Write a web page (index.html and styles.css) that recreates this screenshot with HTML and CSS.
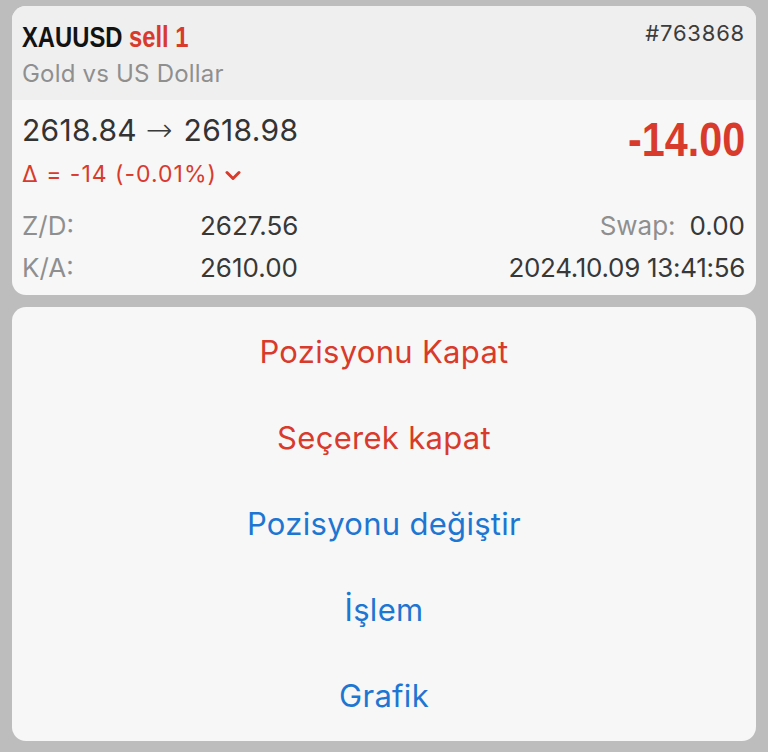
FILE: index.html
```html
<!DOCTYPE html>
<html lang="tr">
<head>
<meta charset="utf-8">
<title>XAUUSD sell 1</title>
<link rel="stylesheet" href="styles.css">
</head>
<body>
<div class="screen">
  <section class="card position">
    <header class="pos-head">
      <div class="head-row">
        <div class="title"><span class="sym">XAUUSD</span> <span class="side">sell 1</span></div>
        <div class="ticket">#763868</div>
      </div>
      <div class="desc">Gold vs US Dollar</div>
    </header>
    <div class="pos-body">
      <div class="price-row">
        <div class="price-col">
          <div class="prices">2618.84 <span class="arrow">→</span> 2618.98</div>
          <div class="delta">Δ = -14 (-0.01%)<svg class="chev" width="16" height="11" viewBox="0 0 16 11"><path d="M2 2.5 L8 8.5 L14 2.5" fill="none" stroke="#d83b2c" stroke-width="3" stroke-linecap="round" stroke-linejoin="round"/></svg></div>
        </div>
        <div class="profit">-14.00</div>
      </div>
      <div class="details">
        <span class="lbl">Z/D:</span><span class="val">2627.56</span><span class="right"><span class="lbl">Swap:</span><span class="val swap">0.00</span></span>
        <span class="lbl">K/A:</span><span class="val">2610.00</span><span class="right"><span class="val date">2024.10.09 13:41:56</span></span>
      </div>
    </div>
  </section>
  <nav class="card actions">
    <div class="action red">Pozisyonu Kapat</div>
    <div class="action red">Seçerek kapat</div>
    <div class="action blue">Pozisyonu değiştir</div>
    <div class="action blue">İşlem</div>
    <div class="action blue">Grafik</div>
  </nav>
</div>
</body>
</html>
```

FILE: styles.css
```css
html, body {
  margin: 0;
  padding: 0;
  background: #bdbdbd;
}
body {
  font-family: Inter, "Liberation Sans", sans-serif;
  color: #3a3a3a;
}
.screen {
  padding: 6px 12px 0 12px;
  display: flex;
  flex-direction: column;
  gap: 12px;
}
.card {
  border-radius: 14px;
  overflow: hidden;
  background: #f7f7f7;
}
.pos-head {
  background: #efefef;
  height: 94px;
  box-sizing: border-box;
  padding: 14px 11px 0 10px;
}
.head-row {
  display: flex;
  justify-content: space-between;
  align-items: flex-start;
}
.title {
  font-family: "Liberation Sans", sans-serif;
  font-weight: bold;
  font-size: 29px;
  line-height: 34px;
  color: #121212;
  white-space: nowrap;
  transform: scaleX(0.82);
  transform-origin: left center;
}
.side {
  color: #d83b2c;
}
.ticket {
  font-size: 22px;
  line-height: 26px;
  letter-spacing: 0.8px;
  color: #3c3c3c;
}
.desc {
  margin-top: 5px;
  font-size: 24px;
  line-height: 30px;
  letter-spacing: 0.2px;
  color: #8f8f8f;
}
.pos-body {
  padding: 13px 11px 6px 10px;
}
.price-row {
  display: flex;
  justify-content: space-between;
  align-items: flex-start;
}
.prices {
  font-size: 30px;
  line-height: 34px;
  letter-spacing: 0.3px;
  color: #333;
  white-space: nowrap;
}
.arrow {
  font-family: "DejaVu Sans", sans-serif;
  font-weight: 200;
  font-size: 32px;
  line-height: 30px;
  margin-right: 2px;
  color: #3a3a3a;
}
.delta {
  margin-top: 13px;
  font-size: 23px;
  line-height: 28px;
  letter-spacing: 1px;
  color: #d83b2c;
  display: flex;
  align-items: center;
}
.chev {
  margin-left: 8px;
  margin-top: 2px;
}
.profit {
  font-family: "Liberation Sans", sans-serif;
  font-weight: bold;
  font-size: 48px;
  line-height: 50px;
  margin-top: 2px;
  color: #d83b2c;
  transform: scaleX(0.86);
  transform-origin: right center;
}
.details {
  margin-top: 17px;
  display: grid;
  grid-template-columns: 178px auto 1fr;
  font-size: 26px;
  line-height: 42px;
}
.lbl {
  color: #8f8f8f;
}
.val {
  color: #383838;
}
.date {
  letter-spacing: -0.3px;
}
.right {
  text-align: right;
}
.swap {
  margin-left: 14px;
}
.actions {
  padding: 2px 0 2px 0;
  display: flex;
  flex-direction: column;
}
.action {
  height: 86px;
  line-height: 86px;
  text-align: center;
  font-size: 31px;
  letter-spacing: 0.3px;
}
.red {
  color: #d83b2c;
}
.blue {
  color: #1d76d2;
}
```
